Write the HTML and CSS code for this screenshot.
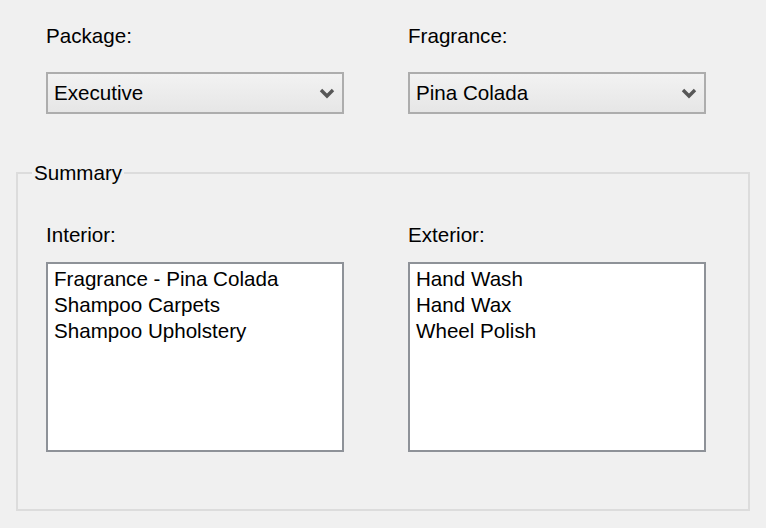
FILE: index.html
```html
<!DOCTYPE html>
<html>
<head>
<meta charset="utf-8">
<link rel="stylesheet" href="styles.css">
</head>
<body>
<div class="form">
  <div class="row top">
    <div class="col">
      <div class="label">Package:</div>
      <div class="combo"><span class="combo-text">Executive</span>
        <svg class="chev" width="16" height="12" viewBox="0 0 16 12"><path d="M2 3 L8 9 L14 3" fill="none" stroke="#575757" stroke-width="3.4"/></svg>
      </div>
    </div>
    <div class="col">
      <div class="label">Fragrance:</div>
      <div class="combo"><span class="combo-text">Pina Colada</span>
        <svg class="chev" width="16" height="12" viewBox="0 0 16 12"><path d="M2 3 L8 9 L14 3" fill="none" stroke="#575757" stroke-width="3.4"/></svg>
      </div>
    </div>
  </div>
  <fieldset class="group">
    <legend class="legend">Summary</legend>
    <div class="row inner">
      <div class="col">
        <div class="label">Interior:</div>
        <div class="listbox">
          <div class="item">Fragrance - Pina Colada</div>
          <div class="item">Shampoo Carpets</div>
          <div class="item">Shampoo Upholstery</div>
        </div>
      </div>
      <div class="col">
        <div class="label">Exterior:</div>
        <div class="listbox">
          <div class="item">Hand Wash</div>
          <div class="item">Hand Wax</div>
          <div class="item">Wheel Polish</div>
        </div>
      </div>
    </div>
  </fieldset>
</div>
</body>
</html>
```
FILE: styles.css
```css
html, body {
  margin: 0;
  padding: 0;
  background: #f0f0f0;
}
body {
  font-family: "Liberation Sans", Arial, sans-serif;
  font-size: 20.6px;
  line-height: 24px;
  color: #000;
  width: 766px;
  height: 528px;
  overflow: hidden;
}
.form {
  padding-top: 24px;
  padding-left: 16px;
}
.row {
  display: flex;
  gap: 64px;
}
.top {
  padding-left: 30px;
}
.col {
  display: flex;
  flex-direction: column;
  width: 298px;
}
.label {
  height: 24px;
}
.combo {
  margin-top: 24px;
  box-sizing: border-box;
  height: 42px;
  border: 2px solid #adadad;
  background: linear-gradient(#f2f2f2, #e6e6e6);
  display: flex;
  align-items: center;
  justify-content: space-between;
  padding: 0 7px 0 6px;
}
.chev {
  display: block;
}
.group {
  margin: 47px 0 0 0;
  box-sizing: border-box;
  width: 734px;
  height: 350px;
  border: 2px solid #dcdcdc;
  padding: 0 0 0 28px;
}
.legend {
  padding: 0 2px;
  margin-left: -14px;
  line-height: 24px;
}
.inner {
  padding-top: 38px;
}
.listbox {
  margin-top: 15px;
  box-sizing: border-box;
  height: 190px;
  background: #fff;
  border: 2px solid #8e9298;
  padding: 2px 0 0 6px;
}
.item {
  line-height: 26px;
  height: 26px;
  white-space: nowrap;
}
```
